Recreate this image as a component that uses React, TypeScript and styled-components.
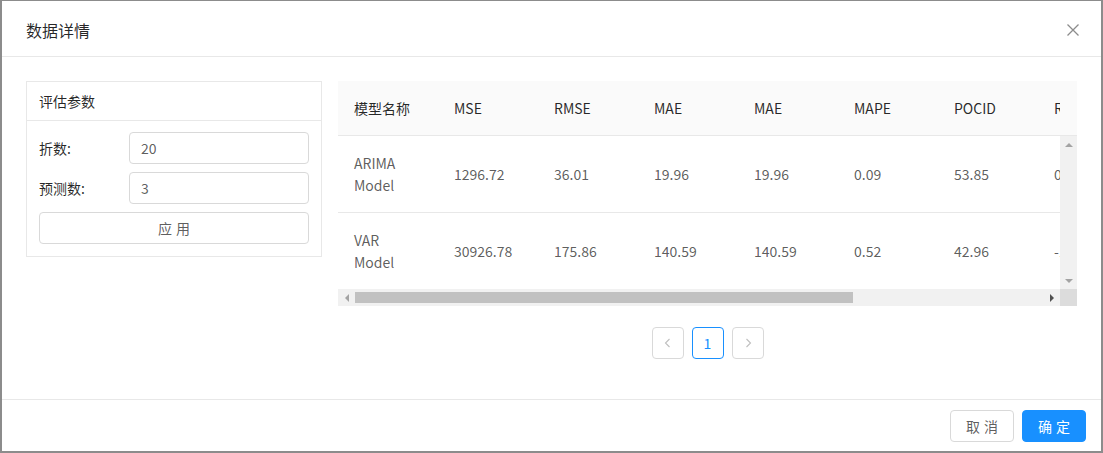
import React from 'react';
import styled, { createGlobalStyle } from 'styled-components';

const Global = createGlobalStyle`
  html, body { margin: 0; padding: 0; background: #fff; }
  body {
    font-family: "Noto Sans CJK SC", "Noto Sans", sans-serif;
    font-size: 14px;
    line-height: 22px;
    color: rgba(0, 0, 0, 0.65);
  }
  * { box-sizing: border-box; }
`;

const Modal = styled.div`
  width: 1103px;
  height: 453px;
  border-style: solid;
  border-color: #8c8c8c;
  border-width: 1px 2px 2px 2px;
  display: flex;
  flex-direction: column;
  background: #fff;
`;

const Header = styled.div`
  height: 56px;
  padding: 2px 0 0 24px;
  border-bottom: 1px solid #e8e8e8;
  display: flex;
  align-items: center;
  justify-content: space-between;
  flex-shrink: 0;
`;

const Title = styled.div`
  font-size: 16px;
  line-height: 22px;
  color: rgba(0, 0, 0, 0.85);
`;

const CloseButton = styled.div`
  width: 56px;
  height: 54px;
  display: flex;
  align-items: center;
  justify-content: center;
`;

const Body = styled.div`
  flex: 1;
  padding: 24px;
  display: grid;
  grid-template-columns: 296px 1fr;
  column-gap: 16px;
  align-items: start;
`;

const Card = styled.div`
  border: 1px solid #e8e8e8;
`;

const CardHead = styled.div`
  height: 39px;
  padding: 0 12px;
  display: flex;
  align-items: center;
  border-bottom: 1px solid #e8e8e8;
  color: rgba(0, 0, 0, 0.85);
`;

const CardBody = styled.div`
  padding: 11px 12px 12px;
  display: flex;
  flex-direction: column;
  gap: 8px;
`;

const FormRow = styled.div`
  height: 32px;
  display: grid;
  grid-template-columns: 90px 1fr;
  align-items: center;
`;

const Label = styled.div`
  color: rgba(0, 0, 0, 0.85);
  height: 22px;
  line-height: 22px;
`;

const Input = styled.div`
  height: 32px;
  border: 1px solid #d9d9d9;
  border-radius: 4px;
  padding: 0 11px;
  display: flex;
  align-items: center;
  color: rgba(0, 0, 0, 0.65);
`;

const Button = styled.div<{ $primary?: boolean; $width?: number }>`
  height: 32px;
  ${(p) => (p.$width ? `width: ${p.$width}px;` : '')}
  border: 1px solid ${(p) => (p.$primary ? '#1890ff' : '#d9d9d9')};
  background: ${(p) => (p.$primary ? '#1890ff' : '#fff')};
  color: ${(p) => (p.$primary ? '#fff' : 'rgba(0, 0, 0, 0.65)')};
  border-radius: 4px;
  display: flex;
  align-items: center;
  justify-content: center;
  letter-spacing: 0.3em;
  text-indent: 0.3em;
`;

const TableArea = styled.div`
  display: flex;
  flex-direction: column;
  min-width: 0;
`;

const HeadRow = styled.div`
  display: flex;
  background: #fafafa;
`;

const Viewport = styled.div<{ $height?: number }>`
  flex: 1;
  min-width: 0;
  overflow: hidden;
  ${(p) => (p.$height ? `height: ${p.$height}px;` : '')}
`;

const Gutter = styled.div`
  width: 17px;
  flex-shrink: 0;
  border-bottom: 1px solid #e8e8e8;
`;

const Table = styled.table`
  table-layout: fixed;
  width: 1000px;
  border-collapse: separate;
  border-spacing: 0;
`;

const Th = styled.th`
  width: 100px;
  height: 55px;
  padding: 0 16px;
  text-align: left;
  font-weight: 400;
  line-height: 22px;
  color: rgba(0, 0, 0, 0.85);
  background: #fafafa;
  border-bottom: 1px solid #e8e8e8;
  white-space: nowrap;
`;

const Td = styled.td`
  width: 100px;
  height: 77px;
  padding: 0 16px;
  line-height: 22px;
  vertical-align: middle;
  border-bottom: 1px solid #e8e8e8;
  color: rgba(0, 0, 0, 0.65);
`;

const BodyRow = styled.div`
  display: flex;
`;

const VTrack = styled.div`
  width: 17px;
  flex-shrink: 0;
  background: #f1f1f1;
  display: flex;
  flex-direction: column;
  justify-content: space-between;
`;

const HBar = styled.div`
  display: flex;
  height: 17px;
`;

const HTrack = styled.div`
  flex: 1;
  display: flex;
  align-items: center;
  background: #f1f1f1;
`;

const ArrowBox = styled.div`
  width: 17px;
  height: 17px;
  flex-shrink: 0;
  display: flex;
  align-items: center;
  justify-content: center;
`;

const Thumb = styled.div<{ $size: number }>`
  width: ${(p) => p.$size}px;
  height: 11px;
  background: #c1c1c1;
`;

const Spacer = styled.div`
  flex: 1;
`;

const Corner = styled.div`
  width: 17px;
  background: #dcdcdc;
`;

const Tri = styled.div<{ $dir: 'up' | 'down' | 'left' | 'right'; $color: string }>`
  width: 0;
  height: 0;
  ${(p) =>
    p.$dir === 'up'
      ? `border-left: 4px solid transparent; border-right: 4px solid transparent; border-bottom: 4px solid ${p.$color};`
      : p.$dir === 'down'
      ? `border-left: 4px solid transparent; border-right: 4px solid transparent; border-top: 4px solid ${p.$color};`
      : p.$dir === 'left'
      ? `border-top: 4px solid transparent; border-bottom: 4px solid transparent; border-right: 4px solid ${p.$color};`
      : `border-top: 4px solid transparent; border-bottom: 4px solid transparent; border-left: 4px solid ${p.$color};`}
`;

const Pagination = styled.div`
  display: flex;
  justify-content: center;
  gap: 8px;
  margin-top: 21px;
`;

const PageItem = styled.div<{ $active?: boolean }>`
  width: 32px;
  height: 32px;
  border: 1px solid ${(p) => (p.$active ? '#1890ff' : '#d9d9d9')};
  border-radius: 4px;
  display: flex;
  align-items: center;
  justify-content: center;
  color: ${(p) => (p.$active ? '#1890ff' : 'rgba(0, 0, 0, 0.65)')};
`;

const Footer = styled.div`
  flex-shrink: 0;
  border-top: 1px solid #e8e8e8;
  padding: 10px 15px 9px 16px;
  display: flex;
  justify-content: flex-end;
  gap: 8px;
`;

const columns = ['模型名称', 'MSE', 'RMSE', 'MAE', 'MAE', 'MAPE', 'POCID', 'R2', 'THEIL', 'DA'];
const rows = [
  ['ARIMA Model', '1296.72', '36.01', '19.96', '19.96', '0.09', '53.85', '0.73', '0.02', '0.54'],
  ['VAR Model', '30926.78', '175.86', '140.59', '140.59', '0.52', '42.96', '-1.37', '0.18', '0.43'],
];

const Chevron = ({ dir }: { dir: 'left' | 'right' }) => (
  <svg width="12" height="12" viewBox="0 0 12 12" fill="none">
    <path
      d={dir === 'left' ? 'M7.5 2 L3.5 6 L7.5 10' : 'M4.5 2 L8.5 6 L4.5 10'}
      stroke="#bfbfbf"
      strokeWidth="1.1"
    />
  </svg>
);

export default function App() {
  return (
    <>
      <Global />
      <Modal>
        <Header>
          <Title>数据详情</Title>
          <CloseButton>
            <svg width="14" height="14" viewBox="0 0 14 14">
              <path d="M1.5 1.5 L12.5 12.5 M12.5 1.5 L1.5 12.5" stroke="#8c8c8c" strokeWidth="1.3" />
            </svg>
          </CloseButton>
        </Header>
        <Body>
          <Card>
            <CardHead>评估参数</CardHead>
            <CardBody>
              <FormRow>
                <Label>折数:</Label>
                <Input>20</Input>
              </FormRow>
              <FormRow>
                <Label>预测数:</Label>
                <Input>3</Input>
              </FormRow>
              <Button>应用</Button>
            </CardBody>
          </Card>
          <TableArea>
            <HeadRow>
              <Viewport>
                <Table>
                  <thead>
                    <tr>
                      {columns.map((c, i) => (
                        <Th key={i}>{c}</Th>
                      ))}
                    </tr>
                  </thead>
                </Table>
              </Viewport>
              <Gutter />
            </HeadRow>
            <BodyRow>
              <Viewport $height={153}>
                <Table>
                  <tbody>
                    {rows.map((r, i) => (
                      <tr key={i}>
                        {r.map((v, j) => (
                          <Td key={j}>{v}</Td>
                        ))}
                      </tr>
                    ))}
                  </tbody>
                </Table>
              </Viewport>
              <VTrack>
                <ArrowBox>
                  <Tri $dir="up" $color="#a3a3a3" />
                </ArrowBox>
                <ArrowBox>
                  <Tri $dir="down" $color="#a3a3a3" />
                </ArrowBox>
              </VTrack>
            </BodyRow>
            <HBar>
              <HTrack>
                <ArrowBox>
                  <Tri $dir="left" $color="#a3a3a3" />
                </ArrowBox>
                <Thumb $size={498} />
                <Spacer />
                <ArrowBox>
                  <Tri $dir="right" $color="#505050" />
                </ArrowBox>
              </HTrack>
              <Corner />
            </HBar>
            <Pagination>
              <PageItem>
                <Chevron dir="left" />
              </PageItem>
              <PageItem $active>1</PageItem>
              <PageItem>
                <Chevron dir="right" />
              </PageItem>
            </Pagination>
          </TableArea>
        </Body>
        <Footer>
          <Button $width={64}>取消</Button>
          <Button $width={64} $primary>
            确定
          </Button>
        </Footer>
      </Modal>
    </>
  );
}
